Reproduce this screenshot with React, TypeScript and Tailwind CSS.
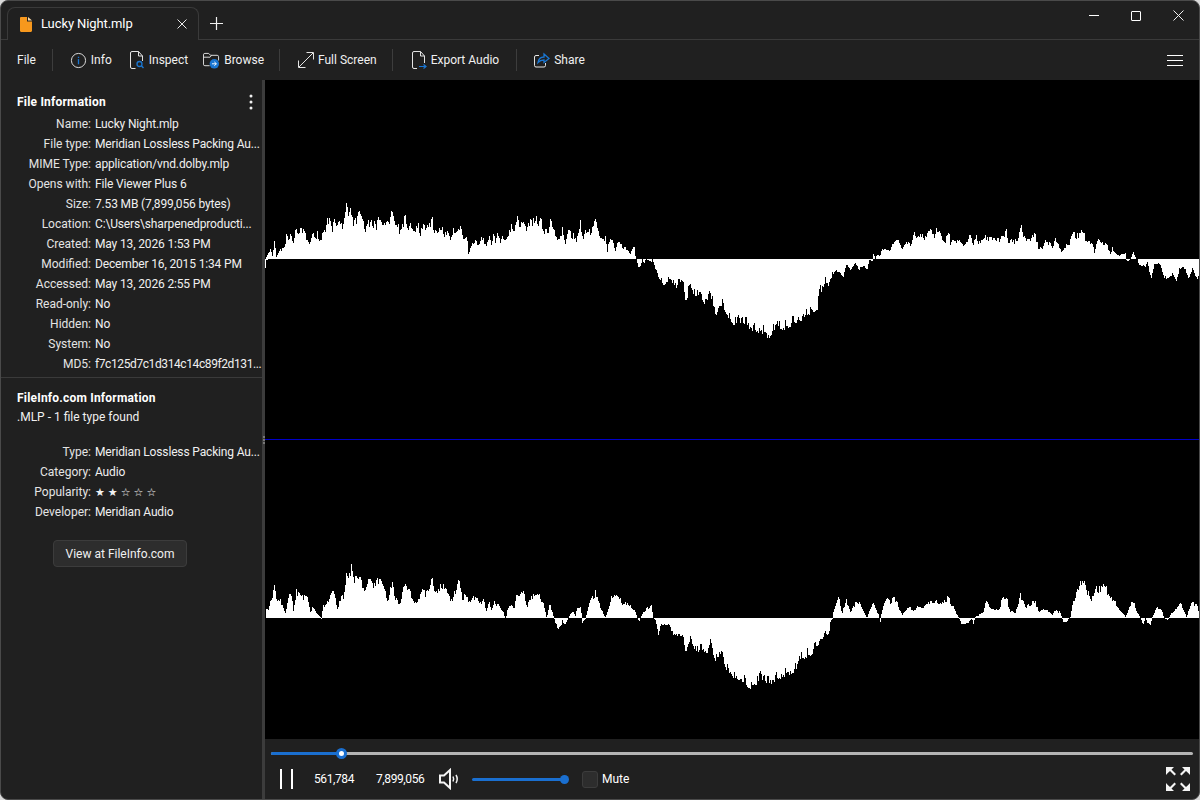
import React from 'react';

const font = "font-['Roboto','Liberation_Sans',sans-serif]";

// envelope points read off the reference at 3x: [x, y] in crop coordinates
const top1 = [10,207,10,207,25,172,30,195,37,140,42,200,55,175,68,172,72,135,85,130,92,165,100,112,105,130,118,103,130,130,142,165,150,135,165,122,172,160,182,120,190,115,196,75,205,85,210,105,215,88,225,108,235,85,240,105,248,65,253,37,258,85,265,45,272,95,290,68,300,90,310,108,317,85,325,95,335,90,342,105,349,70,356,95,370,85,378,100,388,65,398,105,408,105,410,135,420,100,428,65,438,110,450,98,455,115,468,100,472,120,482,100,490,120,500,100,508,70,515,115,525,130,538,103,545,130,553,115,563,145,572,108,578,135,592,98,600,135,614,135,618,190,630,160,636,138,645,165,660,135,672,168,680,135,688,165,692,130,700,150,705,130,715,148,725,130,733,150,745,95,755,125,767,75,775,110,780,85,792,120,808,80,830,82,845,100,855,120,863,77,875,120,890,150,900,110,910,150,918,125,935,125,942,150,955,88,962,150,970,120,985,120,1000,83,1008,125,1015,120,1022,150,1030,135,1035,180,1045,118,1052,140,1058,180,1068,152,1080,165,1095,175,1103,195,1115,160,1120,207,1122,207,1130,242,1140,207,1145,220,1150,207,1168,218,1170,207,1180,240,1190,265,1205,285,1225,265,1240,295,1262,270,1270,335,1285,285,1298,325,1305,310,1330,345,1342,305,1360,375,1375,345,1395,370,1410,400];
const top2 = [732,323,745,325,752,330,760,331,768,338,775,330,785,328,795,322,805,318,812,312,817,308];
const top3 = [262,300,265,260,275,245,285,210,295,235,300,210,310,190,325,185,340,200,347,165,360,178,375,160,385,180,400,165,410,180,418,148,425,158,428,147,428,125,435,147,440,130,448,140,455,115,480,118,490,95,505,92,515,118,530,90,540,100,550,70,570,70,585,75,600,60,610,70,622,48,638,95,645,90,655,52,660,95,675,85,690,95,705,105,718,60,728,100,740,75,750,100,760,75,790,85,810,85,828,58,835,90,855,85,862,92,872,45,885,85,900,90,915,65,925,115,942,100,950,80,965,105,975,85,995,125,1010,100,1030,70,1058,58,1070,95,1085,95,1092,125,1102,85,1115,100,1125,88,1140,130,1146,112,1165,135,1185,130,1187,147,1190,155,1200,147,1208,126,1218,147,1222,147,1225,165,1245,170,1252,155,1262,215,1272,165,1288,160,1303,208,1330,195,1340,215,1348,175,1365,180,1375,205,1385,180,1400,205,1407,215];
const bot1 = [10,189,10,155,18,165,25,135,37,90,42,135,55,135,65,160,68,180,80,120,87,105,93,165,102,95,115,125,125,118,135,130,145,170,150,155,172,185,178,192,182,145,190,150,205,115,213,110,225,155,235,125,245,120,253,40,258,65,267,25,275,60,295,70,305,100,318,75,335,85,348,65,365,100,378,130,388,70,395,110,412,150,428,70,445,115,455,145,462,145,472,125,482,95,490,110,508,68,520,100,530,100,540,75,550,100,565,135,590,75,600,130,610,110,625,145,632,112,650,140,665,135,672,165,680,135,688,165,698,135,720,165,730,190,735,165,745,148,755,160,765,105,770,130,780,95,795,150,808,115,832,120,845,150,853,190,862,145,875,190,885,222,895,222,900,195,908,215,918,189,925,170,935,170,938,189,945,155,955,155,960,205,970,190,975,160,1000,100,1015,160,1030,189,1050,115,1062,120,1085,140,1100,145,1118,160,1125,189,1130,200,1140,175,1150,160,1168,150,1172,189,1180,195,1188,240,1195,210,1220,210,1232,245,1260,240,1270,290,1285,250,1300,290,1335,290,1342,262,1360,320,1375,295,1388,335,1410,365];
const bot2 = [732,677,740,680,750,687,760,680,768,685,778,678,788,675];
const bot3 = [175,330,200,315,215,280,240,270,265,235,285,205,295,220,300,170,309,159,309,140,325,97,335,140,348,105,360,140,375,110,385,105,400,140,410,159,415,140,428,115,445,150,450,170,455,130,470,100,480,110,488,88,500,110,515,150,538,120,550,140,560,125,575,130,598,105,640,110,655,85,660,120,670,125,685,159,693,178,712,175,725,160,728,180,735,155,760,140,765,105,785,130,805,135,812,105,828,90,838,135,855,145,870,88,885,125,915,103,925,140,945,130,965,150,975,135,990,140,995,159,1000,175,1010,170,1020,155,1030,95,1058,35,1070,75,1090,95,1100,60,1125,55,1140,100,1150,100,1165,130,1185,155,1207,100,1228,155,1238,178,1245,159,1258,188,1265,159,1280,125,1295,135,1300,159,1312,165,1320,150,1350,110,1368,155,1385,110,1400,120,1408,155];

const crop = (pts: number[], ox: number, oy: number) => {
  const out: number[] = [];
  for (let i = 0; i < pts.length; i += 2) out.push(ox + pts[i] / 3, oy + pts[i + 1] / 3);
  return out;
};

const wavePath = (pts: number[], base: number, start: number) => {
  let d = '';
  let seed = start;
  let seg = 0;
  let prev = 0;
  const last = pts[pts.length - 2];
  for (let x = Math.ceil(pts[0]); x < last; x++) {
    while (seg < pts.length - 4 && pts[seg + 2] <= x) seg += 2;
    const [x0, y0, x1, y1] = pts.slice(seg, seg + 4);
    const t = x1 === x0 ? 0 : (x - x0) / (x1 - x0);
    const y = y0 + (y1 - y0) * t;
    seed = (seed * 137 + 59) % 1009;
    const r = seed / 1009;
    // spikes eat into the white, the envelope is pushed out a bit to make up for it
    const n = 0.25 * prev + 0.75 * r * r - 0.12;
    prev = n;
    const h = Math.abs(base - y);
    const cut = Math.min(14, h * 0.38) * n;
    const yy = Math.round(y < base ? y + cut : y - cut);
    d += `M${x} ${base}V${yy}h1V${base}z`;
  }
  return d;
};

const topWave = wavePath([...crop(top1, 262, 190), ...top2, ...crop(top3, 730, 210)], 259, 17);
const botWave = wavePath([...crop(bot1, 262, 555), ...bot2, ...crop(bot3, 730, 565)], 618, 211);

const OUT = '#e4e4e4';
const BLUE = '#1a76d2';

const IconFile = () => (
  <svg width="12" height="15" viewBox="0 0 12 15">
    <path d="M0 1.2C0 .5.5 0 1.2 0H7v4.5h5v9.3c0 .7-.5 1.2-1.2 1.2H1.2C.5 15 0 14.500 0 13.800z" fill="#f7981d" />
    <path d="M8 0l4 3.600H8z" fill="#fbd9a6" />
  </svg>
);

const IconInfo = () => (
  <svg width="17" height="17" viewBox="0 0 18 18" fill="none">
    <circle cx="9" cy="9" r="7.500" stroke={OUT} strokeWidth="1" />
    <rect x="8.300" y="7.500" width="1.400" height="5.500" fill={BLUE} />
    <rect x="8.300" y="5" width="1.400" height="1.400" fill={BLUE} />
  </svg>
);

const DocOutline = () => (
  <path d="M6.500 17.500H3a1.500 1.500 0 0 1-1.500-1.500V2A1.500 1.500 0 0 1 3 .5h6.500l4 4.500v5M9.500.5V5h4" stroke={OUT} strokeWidth="1" fill="none" />
);

const IconInspect = () => (
  <svg width="16" height="18" viewBox="0 0 16 18" fill="none">
    <DocOutline />
    <circle cx="10.500" cy="13" r="2.500" stroke={BLUE} strokeWidth="1.300" />
    <path d="M12.300 14.800l2.200 2.200" stroke={BLUE} strokeWidth="1.500" />
  </svg>
);

const IconBrowse = () => (
  <svg width="17" height="17" viewBox="0 0 18 18" fill="none">
    <path d="M7 14.500H2A1.500 1.500 0 0 1 .5 13V3A1.500 1.500 0 0 1 2 1.500h4l2 2h7A1.500 1.500 0 0 1 16.500 5v4M.5 5.500h7l1.500-2" stroke={OUT} strokeWidth="1" />
    <circle cx="12" cy="12.500" r="5" fill={BLUE} />
    <path d="M9.500 12.500h4.500M12 10.500l2.200 2-2.200 2" stroke="#fff" strokeWidth="1" />
  </svg>
);

const IconFullScreen = () => (
  <svg width="16" height="16" viewBox="0 0 16 16" fill="none" stroke={OUT} strokeWidth="1">
    <path d="M1 15L15 1M8.500 .5h7v7M.5 8.500v7h7" />
  </svg>
);

const IconExport = () => (
  <svg width="16" height="18" viewBox="0 0 16 18" fill="none">
    <path d="M6 17.500H3a1.500 1.500 0 0 1-1.500-1.500V2A1.500 1.500 0 0 1 3 .5h6.500l4 4.500v7M9.500.5V5h4" stroke={OUT} strokeWidth="1" />
    <path d="M8 15.500h7M12.500 13.500l2.500 2-2.500 2" stroke={BLUE} strokeWidth="1.200" />
  </svg>
);

const IconShare = () => (
  <svg width="16" height="16" viewBox="0 0 16 16" fill="none">
    <path d="M11.500 11v2.500A1.500 1.500 0 0 1 10 15H2A1.500 1.500 0 0 1 .5 13.500V5A1.500 1.500 0 0 1 2 3.500h3" stroke={OUT} strokeWidth="1" />
    <path d="M4 10.500C4.500 7 7 5 10 5V2l5 4.500-5 4V8C7.500 8 5.500 8.800 4 10.500z" stroke={BLUE} strokeWidth="1.300" />
  </svg>
);

const ToolItem = ({ icon, label }: { icon: React.ReactNode; label: string }) => (
  <div className="flex items-center gap-[4px]">
    {icon}
    <span>{label}</span>
  </div>
);

const Sep = () => <div className="w-px h-[22px] bg-[#3d3d3d]" />;

const InfoRows = ({ rows }: { rows: [string, React.ReactNode][] }) => (
  <div className="flex flex-col">
    {rows.map(([k, v]) => (
      <div key={k} className="flex h-5 items-center">
        <div className="w-[90px] shrink-0 text-right text-[#e4e4e4]">{k}:</div>
        <div className="ml-1 whitespace-nowrap tracking-[-0.15px] text-[#f0f0f0]">{v}</div>
      </div>
    ))}
  </div>
);

const Stars = () => (
  <span className="text-[11px] tracking-[3px] font-['DejaVu_Sans',sans-serif]">★★☆☆☆</span>
);

export default function App() {
  return (
    <div className={`${font} w-[1200px] h-[800px] bg-[#d9d9d9] overflow-hidden text-[12px] text-white`}>
      <div className="w-full h-full flex flex-col bg-[#202020] rounded-lg border border-[#4a4a4a] overflow-hidden">
        {/* title bar */}
        <div className="h-[39px] shrink-0 flex items-end border-b border-[#3a3a3a] relative">
          <div className="ml-[6px] w-[192px] h-[33px] -mb-px flex items-center rounded-t-lg border border-b-0 border-[#3a3a3a] bg-[#202020] pl-[12px] pr-[11px]">
            <IconFile />
            <span className="ml-[9px] text-[13px] tracking-[-0.1px] flex-1">Lucky Night.mlp</span>
            <svg width="10" height="10" viewBox="0 0 10 10" stroke="#e8e8e8" strokeWidth="1">
              <path d="M.5.500l9 9M9.500.500l-9 9" />
            </svg>
          </div>
          <div className="ml-[11px] mb-[9px]">
            <svg width="13" height="13" viewBox="0 0 13 13" stroke="#f0f0f0" strokeWidth="1.200">
              <path d="M6.500 0v13M0 6.500h13" />
            </svg>
          </div>
          <div className="ml-auto self-start mt-[9px] flex items-center gap-[32px] pr-[15px]">
            <div className="w-[10px] h-px bg-white" />
            <div className="w-[10px] h-[10px] border border-white rounded-[1px]" />
            <svg width="11" height="11" viewBox="0 0 11 11" stroke="#f0f0f0" strokeWidth="1">
              <path d="M.5.500l10 10M10.500.500l-10 10" />
            </svg>
          </div>
        </div>

        {/* toolbar */}
        <div className="h-10 shrink-0 flex items-center pl-4 pr-[16px] text-[#f0f0f0]">
          <span>File</span>
          <div className="ml-[16px] mr-[17px]"><Sep /></div>
          <div className="flex items-center gap-[15px]">
            <ToolItem icon={<IconInfo />} label="Info" />
            <div className="ml-[2px]"><ToolItem icon={<IconInspect />} label="Inspect" /></div>
            <ToolItem icon={<IconBrowse />} label="Browse" />
          </div>
          <div className="ml-[15px] mr-[18px]"><Sep /></div>
          <ToolItem icon={<IconFullScreen />} label="Full Screen" />
          <div className="ml-[15px] mr-[18px]"><Sep /></div>
          <ToolItem icon={<IconExport />} label="Export Audio" />
          <div className="ml-[17px] mr-[17px]"><Sep /></div>
          <ToolItem icon={<IconShare />} label="Share" />
          <div className="ml-auto flex flex-col gap-[4px]">
            <div className="w-4 h-px bg-white" />
            <div className="w-4 h-px bg-white" />
            <div className="w-4 h-px bg-white" />
          </div>
        </div>

        <div className="flex-1 flex min-h-0">
          {/* side panel */}
          <div className="w-[261px] shrink-0 flex flex-col">
            <div className="flex items-center justify-between pl-4 pr-[9px] h-[34px] pt-[9px]">
              <span className="font-bold tracking-[0.2px]">File Information</span>
              <svg width="4" height="16" viewBox="0 0 4 16" fill="#f0f0f0">
                <circle cx="2" cy="2" r="1.500" />
                <circle cx="2" cy="8" r="1.500" />
                <circle cx="2" cy="14" r="1.500" />
              </svg>
            </div>
            <InfoRows
              rows={[
                ['Name', 'Lucky Night.mlp'],
                ['File type', 'Meridian Lossless Packing Au...'],
                ['MIME Type', 'application/vnd.dolby.mlp'],
                ['Opens with', 'File Viewer Plus 6'],
                ['Size', '7.53 MB (7,899,056 bytes)'],
                ['Location', 'C:\\Users\\sharpenedproducti...'],
                ['Created', 'May 13, 2026 1:53 PM'],
                ['Modified', 'December 16, 2015 1:34 PM'],
                ['Accessed', 'May 13, 2026 2:55 PM'],
                ['Read-only', 'No'],
                ['Hidden', 'No'],
                ['System', 'No'],
                ['MD5', <span key="md5" className="tracking-[-0.4px]">f7c125d7c1d314c14c89f2d131...</span>],
              ]}
            />
            <div className="mt-[3px] h-px bg-[#3a3a3a]" />
            <div className="pl-4 pt-[10px] font-bold tracking-[0.2px] h-[30px] flex items-center">FileInfo.com Information</div>
            <div className="pl-4 h-[18px] flex items-center text-[#f0f0f0]">.MLP - 1 file type found</div>
            <div className="mt-[16px]">
              <InfoRows
                rows={[
                  ['Type', 'Meridian Lossless Packing Au...'],
                  ['Category', 'Audio'],
                  ['Popularity', <Stars key="s" />],
                  ['Developer', 'Meridian Audio'],
                ]}
              />
            </div>
            <button className="mt-[18px] ml-[52px] w-[134px] h-[27px] rounded bg-[#2d2d2d] border border-[#3c3c3c] text-[#f0f0f0]">
              View at FileInfo.com
            </button>
          </div>

          {/* splitter */}
          <div className="w-[3px] shrink-0 bg-[#3c3c3c] flex flex-col items-center justify-center gap-px">
            <div className="w-[2px] h-[2px] bg-[#777]" />
            <div className="w-[2px] h-[2px] bg-[#777]" />
            <div className="w-[2px] h-[2px] bg-[#777]" />
          </div>

          {/* player */}
          <div className="flex-1 min-w-0 flex flex-col">
            <div className="h-[659px] shrink-0 bg-black">
              <svg width="934" height="659" viewBox="265 80 934 659" shapeRendering="crispEdges" className="block">
                <rect x="265" y="439" width="934" height="1" fill="#0000c8" />
                <path d={topWave} fill="#fff" />
                <path d={botWave} fill="#fff" />
                <path d="M265 268V259h3v1h-2v8z" fill="#fff" />
              </svg>
            </div>
            <div className="flex-1 flex flex-col px-[6px]">
              <div className="relative h-[3px] mt-[13px] bg-[#b4b4b4] rounded-full">
                <div className="h-full w-[70px] bg-[#1a6fd0] rounded-full" />
                <div className="absolute left-[65px] top-[-4px] w-[11px] h-[11px] rounded-full border-[3px] border-[#1a6fd0] bg-white" />
              </div>
              <div className="flex items-center mt-[12px] h-[24px]">
                <div className="ml-[9px] flex gap-[9px]">
                  <div className="w-[2px] h-5 bg-white" />
                  <div className="w-[2px] h-5 bg-white" />
                </div>
                <span className="ml-[21px] w-[62px] tracking-[-0.4px]">561,784</span>
                <span className="w-[63px] tracking-[-0.4px]">7,899,056</span>
                <svg width="21" height="22" viewBox="0 0 21 22" fill="none" stroke="#f4f4f4" strokeWidth="2">
                  <path d="M1 7.500h4L11 2v18l-6-5.500H1z" />
                  <path d="M14 8.500c.8 1.500.8 3.500 0 5M17 7c1.500 2.500 1.500 5.500 0 8" strokeWidth="1.500" />
                </svg>
                <div className="relative ml-[12px] w-[93px] h-[3px] bg-[#1a6fd0] rounded-full">
                  <div className="absolute right-[-4px] top-[-3px] w-[9px] h-[9px] rounded-full bg-[#1a6fd0]" />
                </div>
                <div className="ml-[17px] w-4 h-[17px] rounded-[3px] bg-[#2d2d2d] border border-[#3c3c3c]" />
                <span className="ml-1">Mute</span>
                <svg className="ml-auto mr-[3px]" width="24" height="24" viewBox="0 0 24 24" fill="#f4f4f4">
                  <path d="M0 0h8L5.500 2.500 10 7 8.500 8.500 4 4 1.800 6 0 8z" />
                  <path d="M24 0h-8l2.500 2.500L14 7l1.500 1.500L20 4l2.200 2L24 8z" />
                  <path d="M0 24h8l-2.500-2.500L10 17l-1.500-1.500L4 20l-2.200-2L0 16z" />
                  <path d="M24 24h-8l2.500-2.500L14 17l1.500-1.500L20 20l2.200-2L24 16z" />
                </svg>
              </div>
            </div>
          </div>
        </div>
      </div>
    </div>
  );
}
